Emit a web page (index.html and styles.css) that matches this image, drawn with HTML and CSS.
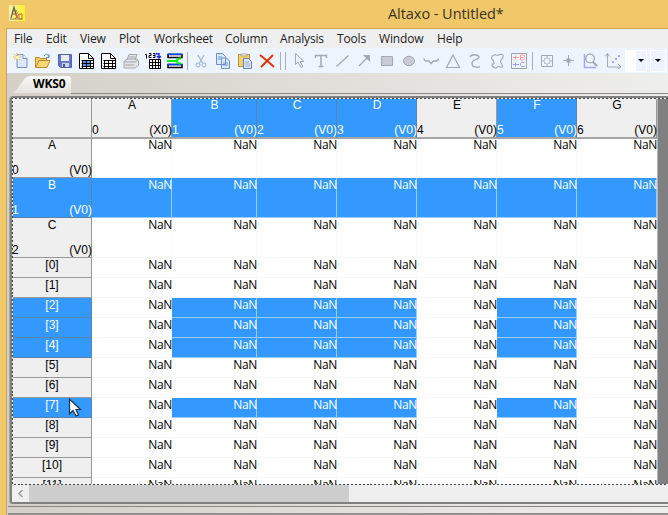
FILE: index.html
```html
<!DOCTYPE html>
<html lang="en">
<head>
<meta charset="utf-8">
<title>Altaxo - Untitled*</title>
<link rel="stylesheet" href="styles.css">
</head>
<body>
<div class="app">
<header class="titlebar">
<svg class="logo" width="16" height="16" viewBox="0 0 16 16"><defs><linearGradient id="lg" x2="1" y2="0"><stop offset="0" stop-color="#f4efaf"/><stop offset="1" stop-color="#fff32a"/></linearGradient></defs><path fill="url(#lg)" d="M0 0h16v16H0z"/><path d="M2 13L5 2l3 11M3 6h5M3 9h4" fill="none" stroke="#716647" stroke-width="1.2"/><path d="M6 9l4 5m0-5l-4 5M10 9h3v5h-3zM8 7v2" fill="none" stroke="#d36b3e"/><path d="M1 14h13" stroke="#968653"/></svg>
<h1 class="title">Altaxo - Untitled*</h1>
</header>
<main class="window">
<nav class="menu"><span>File</span><span>Edit</span><span>View</span><span>Plot</span><span>Worksheet</span><span>Column</span><span>Analysis</span><span>Tools</span><span>Window</span><span>Help</span></nav>
<div class="toolbar">
<div class="group files">
<svg viewBox="0 0 16 16"><path d="M4 1.500h6l4 4v9H4z" fill="#dbe8fb" stroke="#7d91c4"/><path d="M10 1.500v4h4" fill="#fff" stroke="#7d91c4"/><path d="M4 0v8M0 4h8M1 1l6 6M7 1L1 7" stroke="#e4bc3c" stroke-dasharray="1.5 .7"/><path d="M3 3h3v3H3z" fill="#fff6a0"/></svg>
<svg viewBox="0 0 16 16"><path d="M.5 14V4.500h4l1 1h6V8" fill="#f3cd6c" stroke="#b88a2e"/><path d="M.7 14.500L4 7.500h11l-3 7z" fill="#fbd675" stroke="#b88a2e"/><path d="M9 3c2-3 4-2 5 1m0-3v3.500h-3" fill="none" stroke="#668dad"/></svg>
<svg viewBox="0 0 16 16"><path d="M1.500 1.500h13v13h-11l-2-2z" fill="#6677cc" stroke="#5362ae"/><path d="M4 2h8v6H4z" fill="#e7ecf9"/><path d="M5 10h7v4H5z" fill="#d0d6e8"/><path d="M6 11h2v3H6z" fill="#4354a5"/></svg>
<svg viewBox="0 0 16 16"><path d="M.5 15.500V.5h9l5 5v10z" fill="#fff" stroke="#000"/><path d="M4 8h3v2H4zm0 3h3v2H4zm4-3h3v2H8zm0 3h3v2H8z" fill="#5b91ed"/><path d="M9.500 .5v5h5M2.500 7.500h12M2.500 10.500h12M2.500 13.500h12M3.500 7v8M7.500 7v8M11.500 7v8" fill="none" stroke="#000"/></svg>
<svg viewBox="0 0 16 16"><path d="M.5 15.500V.5h9l5 5v10z" fill="#fff" stroke="#000"/><path d="M9.500 .5v5h5M2.500 7.500h12M2.500 10.500h12M2.500 13.500h12M3.500 7v8M7.500 7v8M11.500 7v8" fill="none" stroke="#000"/></svg>
<svg viewBox="0 0 16 16"><path d="M4 7l2-5.500h8L12 7M1 8.500L4 6h10l1.500 2v4l-3 3H1z" fill="#e3e4e6" stroke="#a4a6a9"/><path d="M1 9h11l3-2M2 12h9M6 4h6" fill="none" stroke="#a4a6a9"/></svg>
<svg viewBox="0 0 16 16"><path d="M4.500 6.500h11v9h-11z" fill="#fff" stroke="#000"/><path d="M0 1.500h1.500v4M4 .5h2v2H4v2h2.500M8 .5h2v4H8m0-2h2M4.500 9.500h11M4.500 12.500h11M7.500 7v9M10.500 7v9M13.500 7v9" fill="none" stroke="#000"/><path d="M11 .8h3V4m-2-1l2 2 2-2" fill="none" stroke="#22e" stroke-width="1.400"/></svg>
<svg viewBox="0 0 16 16"><path d="M1 1.500h14v3H1zM1 11.500h14v3H1z" fill="#fff" stroke="#000" stroke-width="1.500"/><path d="M1 1.300h14M1 11.500h14" stroke="#0048ee" stroke-width="1.600"/><path d="M14 5.500h-2L9 8l3 2.500h2M0 8h9" fill="none" stroke="#00ef16" stroke-width="2"/></svg>
</div><i class="sep s1"></i>
<div class="group edit">
<svg viewBox="0 0 16 16"><path d="M5 2l4.500 8M11 2L6.500 10" stroke="#aebccb" stroke-width="1.500"/><circle cx="5" cy="12" r="2" fill="none" stroke="#92b2dd"/><circle cx="11" cy="12" r="2" fill="none" stroke="#92b2dd"/></svg>
<svg viewBox="0 0 16 16"><path d="M1.500 .5h6l3 3v8h-9zM6.500 5h5l3 3v7.500h-8z" fill="#d9e8fa" stroke="#6e8fc8"/><path d="M3 4h4M3 6h4M8 10h5M8 12h5" stroke="#7196cf"/></svg>
<svg viewBox="0 0 16 16"><path d="M1.500 1.500h11v12h-11z" fill="#f5cf68" stroke="#bd913a"/><path d="M4 3V1h2l1-1 1 1h2v2z" fill="#ddd" stroke="#999" stroke-width=".6"/><path d="M6.500 5.500h5l3 3v7h-8z" fill="#dce9fb" stroke="#6380b8"/><path d="M8 9h4M8 11h5M8 13h5" stroke="#91afdb"/></svg>
<svg viewBox="0 0 16 16"><path d="M1 2c5 4 9 7 14 12M14 2L2 14" fill="none" stroke="#e2330b" stroke-width="2"/></svg>
</div><i class="sep s2"></i><i class="sep s3"></i>
<div class="group draw">
<svg viewBox="0 0 16 16"><path d="M4.500.5v11L7 9l3 5.500 2-1-3-5h4z" fill="none" stroke="#a3a8b2"/></svg>
<svg viewBox="0 0 16 16"><path d="M2.500 5V2.500h11V5M8 2v11M5.500 13.500h5" fill="none" stroke="#a3a8b2" stroke-width="1.500"/></svg>
<svg viewBox="0 0 16 16"><path d="M1.500 13.500l12-11" stroke="#a3a8b2" stroke-width="1.300"/></svg>
<svg viewBox="0 0 16 16"><path d="M2 13L11 4" stroke="#a3a8b2" stroke-width="1.300"/><path d="M6 2h7v7z" fill="#a3a8b2"/></svg>
<svg viewBox="0 0 16 16"><path d="M2.500 3.500h11v9h-11z" fill="#c8cbd4" stroke="#a3a8b2"/></svg>
<svg viewBox="0 0 16 16"><ellipse cx="8" cy="8" rx="5.500" ry="4.700" fill="#c8cbd4" stroke="#a3a8b2"/></svg>
<svg viewBox="0 0 16 16"><path d="M1 5.500c0 3 3 2.500 5 2.500l2.200 2.500L10.500 8c2 0 5 .5 5-2.500" fill="none" stroke="#a3a8b2" stroke-width="1.300"/></svg>
<svg viewBox="0 0 16 16"><path d="M8 2l6.500 12.500h-13z" fill="none" stroke="#a3a8b2" stroke-width="1.200"/></svg>
<svg viewBox="0 0 16 16"><path d="M3 4c1-3 8-3 9 0 0 3-7 2-7 6 0 5 4 4 8 4" fill="none" stroke="#a3a8b2" stroke-width="1.300"/></svg>
<svg viewBox="0 0 16 16"><path d="M5 2c2-1 1 1 4 0s6-1 5 2-4 3-2 6 2 5-1 4c-2-2-2 0-4 1-3 0-4-2-4-4 4 0 1-2 1-4-2-1-2-4 1-5z" fill="none" stroke="#a3a8b2" stroke-width="1.200"/></svg>
<svg viewBox="0 0 16 16"><path d="M.5.5h15v15H.5z" fill="#eff3fb" stroke="#9ca3ae"/><path d="M2 4.500h6M4.500 2.500v4M9.500 2v5h3l1-1-1-1.500h-3m3 0l1-1L12.500 2h-3" fill="none" stroke="#ff9b9f"/><path d="M2 11.500h6M4.500 9.500v4M13.500 9.500h-3l-1 1v2l1 1h3" fill="none" stroke="#9b9ff8"/></svg>
</div><i class="sep s4"></i>
<div class="group graph">
<svg viewBox="0 0 16 16"><path d="M2.500 2.500h11v11h-11zM2 8h4M10 8h4M8 2v4M8 10v4M6 5v1H5M10 5v1h1M5 10h1v1M11 10h-1v1" fill="none" stroke="#a3a8b2"/></svg>
<svg viewBox="0 0 16 16"><path d="M2 7.500h11M7.500 2v11" fill="none" stroke="#a3a8b2"/><path d="M5.500 5.500h4v4h-4z" fill="#a3a8b2"/></svg>
<svg viewBox="0 0 16 16"><path d="M1.500 1v13.500H13" fill="none" stroke="#a5a9fc" stroke-width="1.500"/><circle cx="7" cy="5.500" r="4.300" fill="none" stroke="#a3a8b2" stroke-width="1.300"/><path d="M10 9l4 4" stroke="#a3a8b2" stroke-width="2.200"/></svg>
<svg viewBox="0 0 16 16"><path d="M2.500 1v13h13M0 3.500l2.500-3 2.500 3M13 11l3 3-3 2" fill="none" stroke="#a3a8b2"/><path d="M7 8h2v2H7zm3-3h2v2h-2zm3-3h2v2h-2z" fill="#a5a9fc"/></svg>
</div><div class="combo combo-wide"><i></i></div><div class="combo"><i></i></div><div class="combo combo-last"></div>
</div>
<div class="tabs"><svg class="tabshape" width="59" height="18" viewBox="0 0 59 18"><defs><linearGradient id="tab" x2="0" y2="1"><stop stop-color="#f8f8f6"/><stop offset="1" stop-color="#e6e3de"/></linearGradient></defs><path d="M0 18C8 15 10 1 19 1h38q2 0 2 2v15z" fill="url(#tab)"/></svg><span class="tabname">WKS0</span></div>
<div class="tabline"></div>
<section class="document">
<div class="sheet" id="sheet"></div>
<div class="scrollbar"><svg width="17" height="17"><path d="M10.500 5L7 8.500l3.500 3.500" fill="none" stroke="#9c9c9c" stroke-width="1.500"/></svg><div class="thumb"></div></div>
</section>
<div class="bottom"></div>
</main>
<svg class="pointer" width="14" height="20" viewBox="0 0 14 20"><path d="M1.500 1v15l3.500-3.500L8 18l2.500-1-2.500-5.500h4.500z" fill="#fff" stroke="#173553" stroke-width="1.200"/></svg>
</div>
<script src="script.js"></script>
</body>
</html>
```
FILE: styles.css
```css
*{box-sizing:border-box}
body{margin:0;overflow:hidden;background:#f0c869;font-family:"Open Sans",sans-serif;color:#000}
.app{position:relative;width:668px;height:515px;overflow:hidden}
.titlebar{height:28px;position:relative}
.logo{position:absolute;left:9px;top:5px}
.title{margin:0;padding-left:388px;font-size:14.5px;line-height:28px;font-weight:400;white-space:nowrap;color:#3a3324;letter-spacing:-.05px}
.window{margin-left:6px;width:662px;height:487px;border-top:1px solid #d4a657;border-left:1px solid #c6a266;background:linear-gradient(90deg,#d4d0c8,#eeeeec);overflow:hidden}
.menu{height:19px;display:grid;grid-template-columns:32px 34px 39px 35px 71px 55px 57px 42px 58px 40px;padding-left:7px;font-size:12px;line-height:20px;letter-spacing:-.15px;white-space:nowrap;color:#222;background:#efefef}
.toolbar{height:25px;padding-left:6px;display:flex;align-items:center;background:#edf4fd}
.group{display:flex;gap:6px;flex:none}
.group svg{width:16px;height:16px;display:block;flex:none}
.files{margin-right:-1px}
.sep{width:1px;height:18px;background:#aaafb7;flex:none}
.s1{margin:0 5px}.s2{margin-left:5px}.s3{margin:0 5px 0 4px}.s4{margin:0 6px 0 5px}
.combo{width:16px;height:22px;margin-left:3px;border:1px solid #fff;background:#edf4fd;flex:none;display:flex;align-items:center;justify-content:center}
.combo i{width:0;height:0;border:3px solid transparent;border-top:3px solid #000;margin-top:3px}
.combo-wide{width:22px;margin-left:4px;border-left-width:11px}
.combo-last{margin-left:2px}
.tabs{height:20px;display:grid;align-items:end}
.tabshape,.tabname{grid-area:1/1}
.tabshape{display:block;margin-left:5px}
.tabname{padding-left:26px;font:bold 12px/18px "Open Sans",sans-serif;letter-spacing:-.15px;position:relative}
.tabline{height:3px;margin-left:64px;border-top:1px solid #8c8a86}
.document{height:408px;border:solid #808080;border-width:2px 0 2px 2px;margin-left:3px;border-top-left-radius:4px;border-bottom-left-radius:3px;background:#808080;box-shadow:-1px 0 #aaa59d}
.sheet{width:657px;height:387px;overflow:hidden;position:relative;background:#808080;font:12px/14px "Liberation Sans",sans-serif}
.sheet:after{content:"";position:absolute;inset:0;border:1px dashed #555;border-right:0;border-image:repeating-linear-gradient(135deg,#444 0 1.4px,#eee 1.4px 2.8px) 1}
.row{display:grid;grid-template-columns:80px 80px 85px 80px 80px 80px 80px 80px 1px;height:20px}
.tall{height:40px}
.cell{background:#fff;text-align:right;border-right:1px solid #fafafa;border-bottom:1px solid #f8f8f8;font:12px/14px "Open Sans",sans-serif;letter-spacing:-.35px;white-space:nowrap}
.cell span{margin-right:-1px}
.hdr{background:#efefef;border-right:1px solid #999;border-bottom:1px solid #999;display:flex;flex-direction:column;justify-content:space-between;text-align:center;min-width:0;padding-left:1px}
.hdr b{font-weight:400;line-height:14px}
.foot{display:flex;justify-content:space-between;line-height:14px;margin:0 -1px}
.tall .hdr b{line-height:15px}
.tall .foot{line-height:13px}
.selected{background:#3399ff;color:#fff}
.cell.selected{border-color:#9accff}
.hdr.selected{border-color:#5a83b0}
.head{position:relative;z-index:1}
.head .hdr{border-bottom:2px solid #a5a5a5;height:41px}
.edge{background:#b4b4b4}
.sheet:after{z-index:2}
.scrollbar{height:17px;background:#efefef;display:flex}
.thumb{width:320px;background:#cdcdcd}
.bottom{height:9px;margin:2px 0 0 1px;border-top:1px solid #88857f;border-bottom:2px solid #92908c}
.pointer{position:absolute;left:68px;top:398px}
```
FILE: script.js
```js
const sheet = document.getElementById('sheet');
const letters = ['A', 'B', 'C', 'D', 'E', 'F', 'G'];
const selectedColumns = [1, 2, 3, 5];
const header = (name, selected, index, kind) =>
  `<div class="hdr${selected ? ' selected' : ''}"><b>${name}</b>${kind ? `<div class="foot"><span>${index}</span><span>${kind}</span></div>` : ''}</div>`;
let html = `<div class="row tall head">${header('', false)}${letters.map((l, i) => header(l, selectedColumns.includes(i), i, i ? '(V0)' : '(X0)')).join('')}<div class="edge"></div></div>`;
for (let row = 0; row < 15; row++) {
  const property = row < 3;
  const data = row - 3;
  const selected = row === 1 || [2, 3, 4, 7].includes(data);
  const name = property ? letters[row] : `[${data}]`;
  const cells = letters.map((_, i) => `<div class="cell${selected && (property || selectedColumns.includes(i)) ? ' selected' : ''}"><span>NaN</span></div>`).join('');
  html += `<div class="row${property ? ' tall' : ''}">${header(name, selected, row, property ? '(V0)' : '')}${cells}<div class="edge"></div></div>`;
}
sheet.innerHTML = html;
```
